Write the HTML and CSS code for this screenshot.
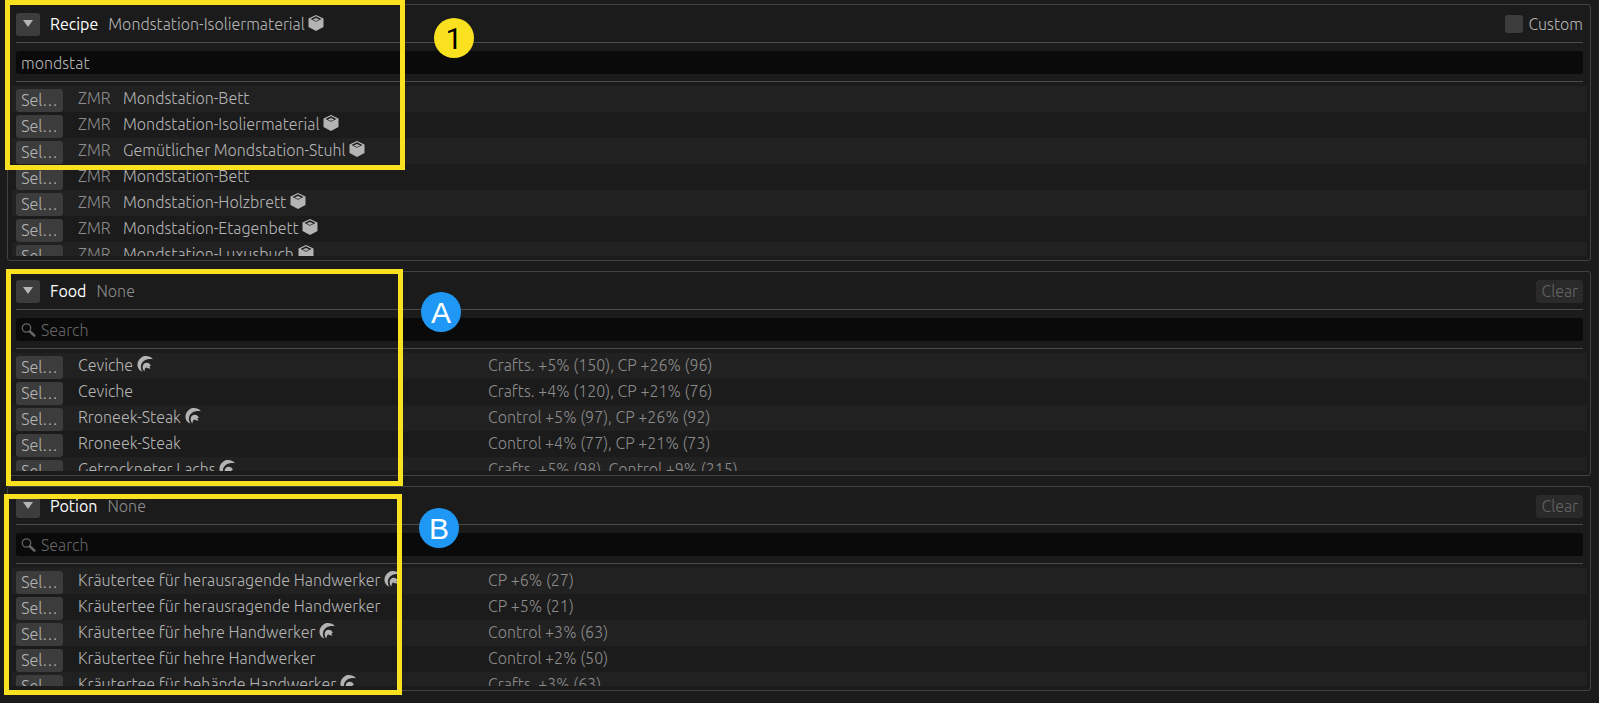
FILE: index.html
```
<!DOCTYPE html>
<html lang="en">
<head>
<meta charset="utf-8">
<title>Crafting simulator</title>
<link rel="stylesheet" href="styles.css">
</head>
<body>
<svg class="sprite" aria-hidden="true">
  <symbol id="cube" viewBox="0 0 16 16">
    <path fill="currentColor" d="M8 0 15.5 3.600V12L8 16 .5 12V3.600z"/>
    <path class="cut" d="M8 1.300 13.500 3.900 8 6.800 2.500 3.900z"/>
    <path fill="currentColor" d="M8 3 11.200 4.400 8 6 4.800 4.400z"/>
  </symbol>
  <symbol id="hq" viewBox="0 0 16 16">
    <path fill="currentColor" d="M16 3.200C13 0 8 -1 4.400 1.500.3 4.500-.8 9.500 2 13.300 3 14.600 4.400 15.400 5.800 15.600 3.900 13.700 3.400 11 4.300 8.300 5.800 4.400 10.300 2 16 3.200z"/>
    <path fill="currentColor" d="M14 10C12.900 6.500 8.900 5.700 6.700 7.900 5 9.800 5.200 13.200 7.500 15.400 7.400 13.500 8 12 9.300 11.400 10.400 12.200 12 12.600 13.800 12.400 13 11.600 12.500 10.900 12.500 9.900z"/>
  </symbol>
  <symbol id="lens" viewBox="0 0 16 16">
    <circle cx="5.500" cy="6" r="4.200" fill="none" stroke="currentColor" stroke-width="1.300"/>
    <path d="M9 9.500 13.300 13.500" stroke="currentColor" stroke-width="2.600" stroke-linecap="round"/>
  </symbol>
  <symbol id="down" viewBox="0 0 10 7"><path fill="currentColor" d="M0 0H10L5 7z"/></symbol>
</svg>

<main class="panels">
  <section class="panel">
    <header class="head">
      <button class="fold" aria-label="Collapse recipe"><svg><use href="#down"/></svg></button>
      <h2>Recipe</h2>
      <span class="value chosen">Mondstation-Isoliermaterial <svg class="icon"><use href="#cube"/></svg></span>
      <label class="custom"><input type="checkbox">Custom</label>
    </header>
    <div class="search"><input type="text" aria-label="Search recipes" value="mondstat"></div>
    <hr>
    <div class="list tall">
      <table>
        <colgroup><col class="c-btn"><col class="c-job"><col></colgroup>
        <tr><td><button>Sel…</button></td><td class="dim">ZMR</td><td>Mondstation-Bett</td></tr>
        <tr><td><button>Sel…</button></td><td class="dim">ZMR</td><td>Mondstation-Isoliermaterial <svg class="icon"><use href="#cube"/></svg></td></tr>
        <tr><td><button>Sel…</button></td><td class="dim">ZMR</td><td>Gemütlicher Mondstation-Stuhl <svg class="icon"><use href="#cube"/></svg></td></tr>
        <tr><td><button>Sel…</button></td><td class="dim">ZMR</td><td>Mondstation-Bett</td></tr>
        <tr><td><button>Sel…</button></td><td class="dim">ZMR</td><td>Mondstation-Holzbrett <svg class="icon"><use href="#cube"/></svg></td></tr>
        <tr><td><button>Sel…</button></td><td class="dim">ZMR</td><td>Mondstation-Etagenbett <svg class="icon"><use href="#cube"/></svg></td></tr>
        <tr><td><button>Sel…</button></td><td class="dim">ZMR</td><td>Mondstation-Luxusbuch <svg class="icon"><use href="#cube"/></svg></td></tr>
      </table>
    </div>
  </section>

  <section class="panel">
    <header class="head">
      <button class="fold" aria-label="Collapse food"><svg><use href="#down"/></svg></button>
      <h2>Food</h2>
      <span class="value">None</span>
      <button class="clear" disabled>Clear</button>
    </header>
    <div class="search"><svg class="lens"><use href="#lens"/></svg><input type="text" aria-label="Search food" placeholder="Search"></div>
    <hr>
    <div class="list">
      <table>
        <colgroup><col class="c-btn"><col class="c-name"><col></colgroup>
        <tr><td><button>Sel…</button></td><td>Ceviche <svg class="icon"><use href="#hq"/></svg></td><td class="dim">Crafts. +5% (150), CP +26% (96)</td></tr>
        <tr><td><button>Sel…</button></td><td>Ceviche</td><td class="dim">Crafts. +4% (120), CP +21% (76)</td></tr>
        <tr><td><button>Sel…</button></td><td>Rroneek-Steak <svg class="icon"><use href="#hq"/></svg></td><td class="dim">Control +5% (97), CP +26% (92)</td></tr>
        <tr><td><button>Sel…</button></td><td>Rroneek-Steak</td><td class="dim">Control +4% (77), CP +21% (73)</td></tr>
        <tr><td><button>Sel…</button></td><td>Getrockneter Lachs <svg class="icon"><use href="#hq"/></svg></td><td class="dim">Crafts. +5% (98), Control +9% (215)</td></tr>
      </table>
    </div>
  </section>

  <section class="panel">
    <header class="head">
      <button class="fold" aria-label="Collapse potion"><svg><use href="#down"/></svg></button>
      <h2>Potion</h2>
      <span class="value">None</span>
      <button class="clear" disabled>Clear</button>
    </header>
    <div class="search"><svg class="lens"><use href="#lens"/></svg><input type="text" aria-label="Search potions" placeholder="Search"></div>
    <hr>
    <div class="list">
      <table>
        <colgroup><col class="c-btn"><col class="c-name"><col></colgroup>
        <tr><td><button>Sel…</button></td><td>Kräutertee für herausragende Handwerker <svg class="icon"><use href="#hq"/></svg></td><td class="dim">CP +6% (27)</td></tr>
        <tr><td><button>Sel…</button></td><td>Kräutertee für herausragende Handwerker</td><td class="dim">CP +5% (21)</td></tr>
        <tr><td><button>Sel…</button></td><td>Kräutertee für hehre Handwerker <svg class="icon"><use href="#hq"/></svg></td><td class="dim">Control +3% (63)</td></tr>
        <tr><td><button>Sel…</button></td><td>Kräutertee für hehre Handwerker</td><td class="dim">Control +2% (50)</td></tr>
        <tr><td><button>Sel…</button></td><td>Kräutertee für behände Handwerker <svg class="icon"><use href="#hq"/></svg></td><td class="dim">Crafts. +3% (63)</td></tr>
      </table>
    </div>
  </section>
</main>

<div class="frame frame-1"></div><span class="mark mark-1">1</span>
<div class="frame frame-a"></div><span class="mark mark-a">A</span>
<div class="frame frame-b"></div><span class="mark mark-b">B</span>
</body>
</html>
```
FILE: styles.css
```
* { box-sizing: border-box; }

body {
  margin: 0;
  position: relative;
  background: #1b1b1b;
  color: #b4b4b4;
  font: 300 16px/22px Ubuntu, "Noto Sans", "Open Sans", sans-serif;
}

button, input { font: inherit; color: inherit; margin: 0; border: 0; }

.sprite { position: absolute; width: 0; height: 0; }
.cut { fill: #1e1e1e; }
.icon { width: 16px; height: 16px; vertical-align: -1px; }

.panels {
  display: flex;
  flex-direction: column;
  gap: 10px;
  padding: 4px 8px 12px 7px;
}

.panel {
  border: 1px solid #424242;
  border-radius: 3px;
  padding: 8px 7px 4px 8px;
}

.head {
  display: flex;
  align-items: center;
  gap: 10px;
  height: 30px;
  padding-bottom: 7px;
  border-bottom: 1px solid #4a4a4a;
}

.head h2 { margin: 0; font-size: 16px; font-weight: 400; color: #fff; }
.value { color: #8c8c8c; }
.chosen { color: #b4b4b4; }

.fold {
  display: grid;
  place-items: center;
  width: 24px;
  height: 23px;
  padding: 0 0 2px;
  border-radius: 3px;
  background: #3c3c3c;
}
.fold svg { width: 10px; height: 7px; }

.custom { display: flex; align-items: center; gap: 5px; margin-left: auto; }
.custom input {
  appearance: none;
  width: 18px;
  height: 18px;
  border-radius: 3px;
  background: #3c3c3c;
}

.clear {
  margin-left: auto;
  height: 23px;
  padding: 0 5px;
  border-radius: 3px;
  background: #2a2a2a;
  color: #646464;
}

.search {
  display: flex;
  align-items: center;
  gap: 4px;
  height: 23px;
  margin: 8px 0 7px;
  padding: 0 5px;
  border-radius: 3px;
  background: #0a0a0a;
  color: #646464;
}
.search input { flex: 1; min-width: 0; padding: 0; background: none; outline: 0; color: #b4b4b4; }
.search input::placeholder { color: #646464; opacity: 1; }
.lens { width: 16px; height: 16px; }

hr { margin: 0; border: 0; border-top: 1px solid #4a4a4a; }

/* Row stripes reach past the header line on both sides */
.list {
  height: 122px;
  margin: 0 -4px;
  padding-top: 4px;
  overflow: auto;
  scrollbar-width: none;
}
.tall { height: 174px; }

table { width: 100%; border-collapse: collapse; table-layout: fixed; }
tr { height: 26px; }
tr:nth-child(odd) { background: #212121; }
td { padding: 0; vertical-align: top; line-height: 24px; white-space: nowrap; }
td:first-child { padding-left: 4px; }
td.dim { color: #8c8c8c; }
td button {
  display: block;
  width: 47px;
  height: 23px;
  margin-top: 3px;
  padding: 0;
  border-radius: 3px;
  background: #3c3c3c;
  line-height: 23px;
}
.c-btn { width: 66px; }
.c-job { width: 45px; }
.c-name { width: 410px; }

.frame { position: absolute; border: 5px solid #fae11f; pointer-events: none; }
.frame-1 { left: 5px; top: 0; width: 400px; height: 170px; }
.frame-a { left: 6px; top: 269px; width: 397px; height: 217px; }
.frame-b { left: 4px; top: 494px; width: 398px; height: 201px; }

.mark {
  position: absolute;
  width: 40px;
  height: 40px;
  border-radius: 50%;
  background: #1f97f4;
  color: #fff;
  font: 400 30px/41px "Liberation Sans", sans-serif;
  text-align: center;
}
.mark-1 { left: 434px; top: 18px; background: #fae11f; color: #000; font-family: Roboto, sans-serif; }
.mark-a { left: 421px; top: 292px; }
.mark-b { left: 419px; top: 508px; }
```
